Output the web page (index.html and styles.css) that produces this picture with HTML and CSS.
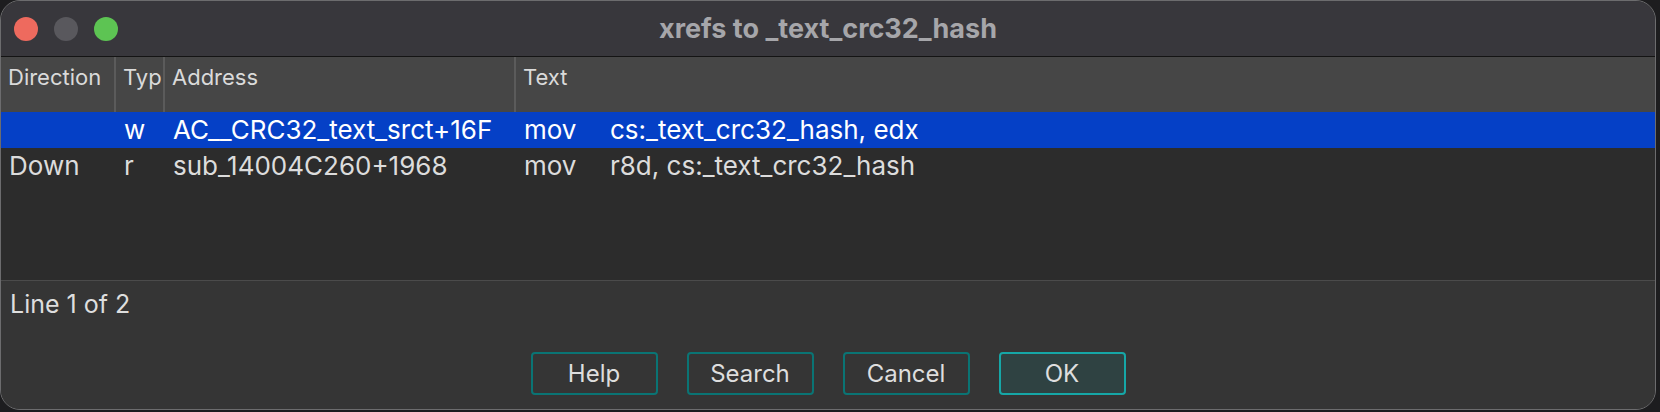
FILE: index.html
```html
<!DOCTYPE html>
<html lang="en">
<head>
<meta charset="utf-8">
<title>xrefs to _text_crc32_hash</title>
<link rel="stylesheet" href="styles.css">
</head>
<body>
<div class="window">
  <div class="titlebar">
    <div class="lights">
      <span class="light red"></span>
      <span class="light gray"></span>
      <span class="light green"></span>
    </div>
    <div class="title">xrefs to _text_crc32_hash</div>
    <div class="spacer"></div>
  </div>
  <div class="table">
    <div class="thead">
      <div class="th">Direction</div>
      <div class="th">Typ</div>
      <div class="th">Address</div>
      <div class="th">Text</div>
    </div>
    <div class="tbody">
      <div class="tr selected">
        <div class="td"></div>
        <div class="td">w</div>
        <div class="td">AC__CRC32_text_srct+16F</div>
        <div class="td"><span class="op">mov</span><span>cs:_text_crc32_hash, edx</span></div>
      </div>
      <div class="tr">
        <div class="td">Down</div>
        <div class="td">r</div>
        <div class="td">sub_14004C260+1968</div>
        <div class="td"><span class="op">mov</span><span>r8d, cs:_text_crc32_hash</span></div>
      </div>
    </div>
  </div>
  <div class="footer">
    <div class="status">Line 1 of 2</div>
    <div class="buttons">
      <button class="btn">Help</button>
      <button class="btn">Search</button>
      <button class="btn">Cancel</button>
      <button class="btn default">OK</button>
    </div>
  </div>
</div>
</body>
</html>
```
FILE: styles.css
```css
html, body {
  margin: 0;
  padding: 0;
  background: #1d1d1f;
}
body {
  width: 1660px;
  height: 412px;
  overflow: hidden;
  font-family: Inter, "Liberation Sans", sans-serif;
}
.window {
  box-sizing: border-box;
  width: 1656px;
  height: 410px;
  border: 1px solid #6c6c6e;
  border-radius: 20px;
  overflow: hidden;
  display: flex;
  flex-direction: column;
  background: #353535;
}
.titlebar {
  flex: none;
  height: 55px;
  border-bottom: 1px solid #141414;
  background: #38373c;
  display: grid;
  grid-template-columns: 1fr auto 1fr;
  align-items: center;
}
.lights {
  display: flex;
  gap: 16px;
  padding-left: 13px;
  padding-top: 1px;
}
.light {
  width: 24px;
  height: 24px;
  border-radius: 50%;
}
.light.red { background: #ee6a5e; }
.light.gray { background: #59585d; }
.light.green { background: #5dc453; }
.title {
  font-size: 27px;
  font-weight: 700;
  color: #a6a6aa;
  white-space: nowrap;
  padding-bottom: 1px;
}
.table {
  flex: none;
  height: 223px;
  background: #2c2c2c;
  border-bottom: 1px solid #4b4b4b;
}
.thead, .tr {
  display: grid;
  grid-template-columns: 115px 49px 351px 1fr;
}
.thead {
  height: 55px;
  background: #464646;
}
.th {
  box-sizing: border-box;
  border-right: 2px solid #5b5b5b;
  padding: 5px 0 0 7px;
  font-size: 22px;
  line-height: 30px;
  color: #dadada;
  white-space: nowrap;
}
.th:last-child { border-right: none; }
.tr {
  height: 36px;
  align-items: center;
  color: #dcdcdc;
  font-size: 26px;
}
.tr.selected {
  background: #0540c6;
  color: #ffffff;
}
.td {
  padding-left: 8px;
  white-space: nowrap;
  line-height: 36px;
}
.op {
  display: inline-block;
  width: 86px;
}
.footer {
  flex: 1;
  background: #353535;
  display: flex;
  flex-direction: column;
}
.status {
  padding: 8px 0 0 9px;
  font-size: 25px;
  line-height: 30px;
  color: #dedede;
}
.buttons {
  margin-top: 33px;
  display: flex;
  justify-content: center;
  gap: 29px;
}
.btn {
  box-sizing: border-box;
  width: 127px;
  height: 43px;
  border: 2px solid #0a7474;
  border-radius: 4px;
  background: transparent;
  color: #dedede;
  font-family: Inter, "Liberation Sans", sans-serif;
  font-size: 24px;
  padding: 0;
}
.btn.default {
  border-color: #16a7a7;
  background: #2f4242;
}
```
